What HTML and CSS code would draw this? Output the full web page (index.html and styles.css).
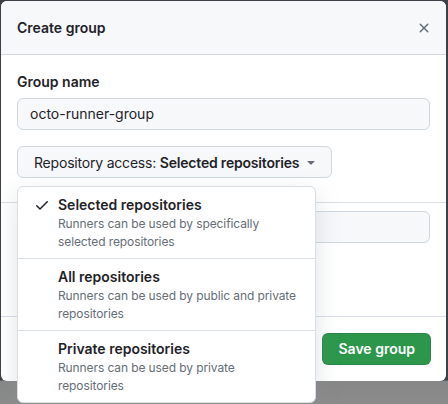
FILE: index.html
```html
<!DOCTYPE html>
<html>
<head>
<meta charset="utf-8">
<link rel="stylesheet" href="styles.css">
</head>
<body>
<div class="dialog">
  <div class="header">
    <h1 class="title">Create group</h1>
    <svg class="close" width="16" height="16" viewBox="0 0 16 16"><path fill="#656d76" d="M3.72 3.72a.75.75 0 0 1 1.06 0L8 6.94l3.22-3.22a.749.749 0 0 1 1.275.326.749.749 0 0 1-.215.734L9.06 8l3.22 3.22a.749.749 0 0 1-.326 1.275.749.749 0 0 1-.734-.215L8 9.06l-3.220 3.22a.751.751 0 0 1-1.042-.018.751.751 0 0 1-.018-1.042L6.94 8 3.72 4.78a.75.75 0 0 1 0-1.06Z"/></svg>
  </div>
  <div class="body">
    <label class="label">Group name</label>
    <div class="input">octo-runner-group</div>
    <div class="access">
      <div class="btn">Repository access: <strong>Selected repositories</strong>
        <svg class="caret" width="16" height="16" viewBox="0 0 16 16"><path fill="#656d76" d="m4.427 7.427 3.396 3.396a.25.25 0 0 0 .354 0l3.396-3.396A.25.25 0 0 0 11.396 7H4.604a.25.25 0 0 0-.177.427Z"/></svg>
      </div>
      <div class="menu">
        <div class="item">
          <svg class="check" width="16" height="16" viewBox="0 0 16 16"><path fill="#1f2328" d="M13.78 4.22a.75.75 0 0 1 0 1.06l-7.25 7.25a.75.75 0 0 1-1.06 0L2.22 9.28a.751.751 0 0 1 .018-1.042.751.751 0 0 1 1.042-.018L6 10.94l6.72-6.72a.75.75 0 0 1 1.060 0Z"/></svg>
          <div class="text">
            <div class="item-title">Selected repositories</div>
            <div class="desc">Runners can be used by specifically<br>selected repositories</div>
          </div>
        </div>
        <div class="item">
          <span class="check"></span>
          <div class="text">
            <div class="item-title">All repositories</div>
            <div class="desc">Runners can be used by public and private<br>repositories</div>
          </div>
        </div>
        <div class="item">
          <span class="check"></span>
          <div class="text">
            <div class="item-title">Private repositories</div>
            <div class="desc">Runners can be used by private<br>repositories</div>
          </div>
        </div>
      </div>
    </div>
  </div>
  <div class="section">
    <div class="input empty"></div>
  </div>
  <div class="footer">
    <div class="save">Save group</div>
  </div>
</div>
</body>
</html>
```

FILE: styles.css
```css
* { box-sizing: border-box; }
html, body { margin: 0; padding: 0; }
body {
  width: 448px;
  height: 404px;
  overflow: hidden;
  background: linear-gradient(#3c4147 0, #3c4147 380px, #878787 381px, #8b8b8b 404px);
  font-family: Inter, "Noto Sans", sans-serif;
  font-size: 14px;
  color: #1f2328;
  padding-top: 1px;
  padding-left: 1px;
}
.dialog {
  width: 445px;
  height: 380px;
  background: #fff;
  border-radius: 6px;
  display: flex;
  flex-direction: column;
}
.header {
  height: 54px;
  background: #f6f8fa;
  border-bottom: 1px solid #d0d7de;
  border-radius: 6px 6px 0 0;
  display: flex;
  align-items: center;
  justify-content: space-between;
  padding: 0 14px 0 16px;
}
.title {
  margin: 0;
  font-size: 14px;
  font-weight: 600;
  line-height: 20px;
}
.close { display: block; }
.body {
  padding: 17px 16px 24px;
  display: flex;
  flex-direction: column;
  border-bottom: 1px solid #d8dee4;
}
.label {
  font-weight: 600;
  line-height: 20px;
  margin-bottom: 6px;
}
.input {
  height: 32px;
  background: #f6f8fa;
  border: 1px solid #d0d7de;
  border-radius: 6px;
  padding: 0 12px;
  line-height: 30px;
  width: 413px;
}
.access {
  position: relative;
  margin-top: 16px;
}
.btn {
  display: inline-flex;
  align-items: center;
  height: 32px;
  padding: 0 12px 0 16px;
  background: #f6f8fa;
  border: 1px solid #d0d7de;
  border-radius: 6px;
  white-space: pre;
  font-weight: 400;
  letter-spacing: -0.2px;
}
.btn strong { font-weight: 600; }
.caret { margin-left: 4px; display: block; }
.menu {
  position: absolute;
  left: 0;
  top: 40px;
  width: 299px;
  background: #fff;
  border: 1px solid #d8dee4;
  border-radius: 6px;
  box-shadow: 0 8px 24px rgba(140, 149, 159, 0.25);
  z-index: 5;
}
.item {
  display: flex;
  gap: 8px;
  padding: 8px 16px 7px;
}
.item + .item { border-top: 1px solid #d8dee4; padding-top: 8px; }
.check {
  width: 16px;
  height: 16px;
  flex: none;
  margin-top: 2px;
  display: block;
}
.item-title {
  font-weight: 600;
  line-height: 20px;
}
.desc {
  font-size: 12px;
  line-height: 18px;
  color: #656d76;
  white-space: nowrap;
  letter-spacing: -0.1px;
}
.section {
  padding: 8px 16px;
  height: 114px;
  border-bottom: 1px solid #d8dee4;
}
.footer {
  flex: 1;
  display: flex;
  justify-content: flex-end;
  padding: 16px 15px 0 0;
}
.save {
  height: 32px;
  padding: 0 15px;
  line-height: 30px;
  background: #2c974b;
  color: #fff;
  font-weight: 600;
  border-radius: 6px;
  border: 1px solid rgba(31, 35, 40, 0.15);
}
```
